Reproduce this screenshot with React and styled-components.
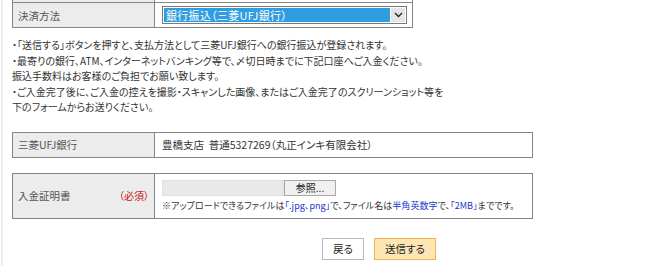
import React from "react";
import styled, { createGlobalStyle } from "styled-components";

const Global = createGlobalStyle`
  html, body { margin: 0; padding: 0; background: #fff; }
  body {
    font-family: "Noto Sans CJK JP", "Liberation Sans", sans-serif;
    font-size: 10px;
    color: #333;
    font-feature-settings: "palt";
    overflow: hidden;
  }
`;

const Page = styled.div`
  width: 650px;
  height: 266px;
  overflow: hidden;
  box-sizing: border-box;
  padding-left: 1px;
`;

const Frame = styled.div`
  border-left: 2px solid #efefef;
  height: 100%;
  padding-left: 9px;
  display: flex;
  flex-direction: column;
`;

const Table = styled.div`
  width: ${(p) => p.$w}px;
  border: 1px solid #858585;
  border-top: ${(p) => (p.$noTop ? "none" : "1px solid #858585")};
  margin-top: ${(p) => p.$mt || 0}px;
  box-sizing: border-box;
  display: flex;
  flex-direction: column;
`;

const Row = styled.div`
  display: grid;
  grid-template-columns: 142px 1fr;
  height: ${(p) => p.$h}px;
  border-top: ${(p) => (p.$sep ? "1px solid #858585" : "none")};
`;

const Label = styled.div`
  background: #ececec;
  border-right: 1px solid #858585;
  display: flex;
  align-items: center;
  justify-content: space-between;
  padding: 0 5px 0 5px;
  color: #555;
  font-size: 10.5px;
`;

const Required = styled.span`
  color: #cc1111;
  font-size: 10px;
`;

const Value = styled.div`
  display: flex;
  flex-direction: ${(p) => (p.$col ? "column" : "row")};
  align-items: ${(p) => (p.$col ? "flex-start" : "center")};
  justify-content: ${(p) => (p.$col ? "center" : "flex-start")};
  padding: 0 7px;
  gap: 3px;
  font-size: 10.5px;
  color: #333;
`;

const Select = styled.div`
  width: 245px;
  height: 18px;
  border: 1px solid #7a7a7a;
  box-sizing: border-box;
  display: flex;
  padding: 1px;
  background: #fff;
`;

const SelectText = styled.div`
  flex: 1;
  background: #2f9de0;
  color: #fff;
  font-size: 11px;
  letter-spacing: 0.3px;
  line-height: 14px;
  padding-left: 2px;
`;

const SelectArrow = styled.div`
  width: 14px;
  background: #e4e4e4;
  border-left: 1px solid #fff;
  display: flex;
  align-items: center;
  justify-content: center;
`;

const Notes = styled.div`
  margin-top: 9px;
  line-height: 15.5px;
  font-size: 10px;
  color: #333;
`;

const FileRow = styled.div`
  display: flex;
  height: 16px;
`;

const FileField = styled.div`
  width: 122px;
  background: #e9e9e9;
  border: 1px solid #e0e0e0;
  box-sizing: border-box;
`;

const Browse = styled.div`
  width: 52px;
  border: 1px solid #a9a9a9;
  background: #f0f0f0;
  box-sizing: border-box;
  display: flex;
  align-items: center;
  justify-content: center;
  font-size: 10px;
  color: #222;
`;

const Small = styled.div`
  font-size: 9px;
  letter-spacing: 0.05px;
  white-space: nowrap;
  color: #333;
`;

const Blue = styled.span`
  color: #1a33cc;
`;

const Buttons = styled.div`
  display: flex;
  gap: 10px;
  margin-top: 19px;
  padding-left: 310px;
`;

const Button = styled.div`
  width: ${(p) => p.$w}px;
  height: 22px;
  box-sizing: border-box;
  border: 1px solid ${(p) => (p.$primary ? "#f2b357" : "#b9b9b9")};
  background: ${(p) => (p.$primary ? "#fde6b4" : "#fff")};
  display: flex;
  align-items: center;
  justify-content: center;
  font-size: 10.5px;
  color: #222;
`;

export default function App() {
  return (
    <Page>
      <Global />
      <Frame>
        <Table $w={401} $noTop>
          <Row $h={2}>
            <Label />
            <Value />
          </Row>
          <Row $h={24} $sep>
            <Label>決済方法</Label>
            <Value>
              <Select>
                <SelectText>銀行振込（三菱UFJ銀行）</SelectText>
                <SelectArrow>
                  <svg width="9" height="6" viewBox="0 0 9 6">
                    <path d="M1 1 L4.5 4.5 L8 1" fill="none" stroke="#222" strokeWidth="1.3" />
                  </svg>
                </SelectArrow>
              </Select>
            </Value>
          </Row>
        </Table>
        <Notes>
          ・「送信する」ボタンを押すと、支払方法として三菱UFJ銀行への銀行振込が登録されます。
          <br />
          ・最寄りの銀行、ATM、インターネットバンキング等で、〆切日時までに下記口座へご入金ください。
          <br />
          振込手数料はお客様のご負担でお願い致します。
          <br />
          ・ご入金完了後に、ご入金の控えを撮影・スキャンした画像、またはご入金完了のスクリーンショット等を
          <br />
          下のフォームからお送りください。
        </Notes>
        <Table $w={521} $mt={17}>
          <Row $h={24}>
            <Label>三菱UFJ銀行</Label>
            <Value>豊橋支店 &nbsp;普通5327269（丸正インキ有限会社）</Value>
          </Row>
        </Table>
        <Table $w={521} $mt={15}>
          <Row $h={44}>
            <Label>
              入金証明書<Required>（必須）</Required>
            </Label>
            <Value $col>
              <FileRow>
                <FileField />
                <Browse>参照...</Browse>
              </FileRow>
              <Small>
                ※アップロードできるファイルは<Blue>「.jpg、png」</Blue>で、ファイル名は
                <Blue>半角英数字</Blue>で、<Blue>「2MB」</Blue>までです。
              </Small>
            </Value>
          </Row>
        </Table>
        <Buttons>
          <Button $w={42}>戻る</Button>
          <Button $w={62} $primary>
            送信する
          </Button>
        </Buttons>
      </Frame>
    </Page>
  );
}
